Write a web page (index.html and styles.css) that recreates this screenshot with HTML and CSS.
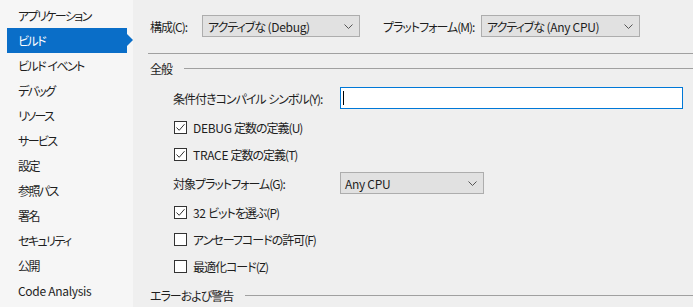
FILE: index.html
```html
<!DOCTYPE html>
<html lang="ja">
<head>
    <meta charset="UTF-8">
    <title>ビルド - プロジェクト プロパティ</title>
    <link rel="stylesheet" href="styles.css">
</head>
<body>
    <nav class="sidebar">
        <div class="nav-item">アプリケーション</div>
        <div class="nav-item active">ビルド</div>
        <div class="nav-item">ビルド<span class="latin"> </span>イベント</div>
        <div class="nav-item">デバッグ</div>
        <div class="nav-item">リソース</div>
        <div class="nav-item">サービス</div>
        <div class="nav-item">設定</div>
        <div class="nav-item">参照パス</div>
        <div class="nav-item">署名</div>
        <div class="nav-item">セキュリティ</div>
        <div class="nav-item">公開</div>
        <div class="nav-item latin">Code Analysis</div>
    </nav>

    <main class="content">
        <div class="config-bar">
            <span class="bar-label config-label">構成(C):</span>
            <div class="select select-config">
                <span>アクティブな<span class="latin"> (Debug)</span></span>
                <svg class="chevron" viewBox="0 0 9 5"><path d="M0.5 0.5 L4.5 4.5 L8.5 0.5" /></svg>
            </div>
            <span class="bar-label platform-label">プラットフォーム(M):</span>
            <div class="select select-platform">
                <span>アクティブな<span class="latin"> (Any CPU)</span></span>
                <svg class="chevron" viewBox="0 0 9 5"><path d="M0.5 0.5 L4.5 4.5 L8.5 0.5" /></svg>
            </div>
        </div>

        <div class="rule"></div>

        <section class="group">
            <div class="group-title"><span>全般</span><span class="title-line"></span></div>

            <div class="group-body">
                <div class="field-row">
                    <span class="field-label">条件付きコンパイル<span class="latin"> </span>シンボル(Y):</span>
                    <div class="textbox"><span class="caret"></span></div>
                </div>

                <div class="check-row">
                    <span class="box checked"><svg viewBox="0 0 11 11"><path d="M1.5 5.5 L4.2 8.3 L9.5 2.2" /></svg></span>
                    <span><span class="latin">DEBUG </span>定数の定義(U)</span>
                </div>
                <div class="check-row">
                    <span class="box checked"><svg viewBox="0 0 11 11"><path d="M1.5 5.5 L4.2 8.3 L9.5 2.2" /></svg></span>
                    <span><span class="latin">TRACE </span>定数の定義(T)</span>
                </div>

                <div class="field-row">
                    <span class="field-label">対象プラットフォーム(G):</span>
                    <div class="select select-target">
                        <span class="latin">Any CPU</span>
                        <svg class="chevron" viewBox="0 0 9 5"><path d="M0.5 0.5 L4.5 4.5 L8.5 0.5" /></svg>
                    </div>
                </div>

                <div class="check-row">
                    <span class="box checked"><svg viewBox="0 0 11 11"><path d="M1.5 5.5 L4.2 8.3 L9.5 2.2" /></svg></span>
                    <span><span class="latin">32 </span>ビットを選ぶ(P)</span>
                </div>
                <div class="check-row">
                    <span class="box"></span>
                    <span>アンセーフコードの許可(F)</span>
                </div>
                <div class="check-row">
                    <span class="box"></span>
                    <span>最適化コード(Z)</span>
                </div>
            </div>
        </section>

        <section class="group group-errors">
            <div class="group-title"><span>エラーおよび警告</span><span class="title-line"></span></div>
        </section>
    </main>
</body>
</html>
```

FILE: styles.css
```css
* {
    margin: 0;
    padding: 0;
    box-sizing: border-box;
}

html, body {
    height: 100%;
    overflow: hidden;
}

body {
    display: flex;
    font-family: "Noto Sans CJK JP", sans-serif;
    font-size: 12px;
    font-feature-settings: "palt";
    letter-spacing: -1px;
    color: #1e1e1e;
    background: #efefef;
}

/* latin runs keep close to normal spacing */
.latin {
    letter-spacing: -0.3px;
}

/* left navigation */
.sidebar {
    width: 133px;
    flex-shrink: 0;
    padding-top: 3px;
    background: #f6f6f6;
}

.nav-item {
    position: relative;
    height: 25px;
    line-height: 25px;
    width: 120px;
    margin-left: 7px;
    padding-left: 11px;
    white-space: nowrap;
    letter-spacing: -1.6px;
}

.nav-item.latin {
    letter-spacing: -0.3px;
}

.nav-item.active {
    background: #0a6ec8;
    color: #fff;
}

.nav-item.active::after {
    content: "";
    position: absolute;
    right: -6px;
    top: 6px;
    border-top: 6px solid transparent;
    border-bottom: 6px solid transparent;
    border-left: 6px solid #0a6ec8;
}

/* main pane */
.content {
    flex: 1;
    padding-left: 15px;
}

.config-bar {
    display: flex;
    align-items: center;
    height: 22px;
    margin-top: 15px;
    padding-left: 2px;
}

.bar-label {
    white-space: nowrap;
}

.config-label {
    width: 52px;
}

.platform-label {
    width: 98px;
    margin-left: 23px;
}

.select {
    display: flex;
    align-items: center;
    justify-content: space-between;
    flex-shrink: 0;
    height: 22px;
    padding: 0 6px 0 5px;
    background: #e1e1e1;
    border: 1px solid #adadad;
    white-space: nowrap;
}

.select-config {
    width: 158px;
}

.select-platform {
    width: 159px;
}

.select-target {
    width: 144px;
    padding-left: 4px;
}

.chevron {
    width: 9px;
    height: 5px;
    fill: none;
    stroke: #555;
    stroke-width: 1;
}

.rule {
    height: 1px;
    margin-top: 16px;
    background: #a0a0a0;
}

.group-title {
    display: flex;
    align-items: center;
    height: 16px;
    margin-top: 6px;
    padding-left: 2px;
    white-space: nowrap;
}

.title-line {
    flex: 1;
    height: 1px;
    margin-left: 12px;
    background: #a0a0a0;
}

.group-body {
    padding-left: 25px;
}

.field-row {
    display: flex;
    align-items: center;
    height: 22px;
    margin-top: 9px;
}

.group-body .field-row:first-child {
    margin-top: 11px;
}

.field-label {
    width: 167px;
    flex-shrink: 0;
    white-space: nowrap;
}

.textbox {
    width: 343px;
    height: 22px;
    background: #fff;
    border: 1px solid #0078d7;
    padding: 3px 0 0 2px;
}

.caret {
    display: block;
    width: 1px;
    height: 14px;
    background: #000;
}

.check-row {
    display: flex;
    align-items: center;
    height: 18px;
    margin-top: 9px;
    white-space: nowrap;
}

.box {
    display: flex;
    align-items: center;
    justify-content: center;
    flex-shrink: 0;
    width: 13px;
    height: 13px;
    margin-left: 1px;
    margin-right: 6px;
    background: #fff;
    border: 1px solid #333;
}

.box svg {
    width: 11px;
    height: 11px;
    fill: none;
    stroke: #333;
    stroke-width: 1;
}

.group-errors .group-title {
    margin-top: 12px;
}
```
